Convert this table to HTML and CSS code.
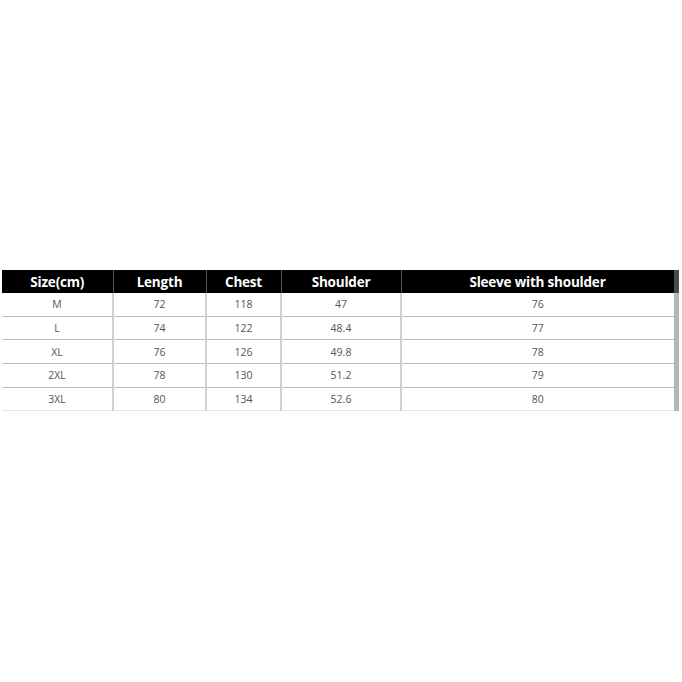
FILE: index.html
```html
<!DOCTYPE html>
<html>
<head>
<meta charset="utf-8">
<link rel="stylesheet" href="styles.css">
</head>
<body>
<div class="page">
  <table class="size-table">
    <colgroup>
      <col class="c1"><col class="c2"><col class="c3"><col class="c4"><col class="c5">
    </colgroup>
    <thead>
      <tr><th>Size(cm)</th><th>Length</th><th>Chest</th><th>Shoulder</th><th>Sleeve with shoulder</th></tr>
    </thead>
    <tbody>
      <tr><td>M</td><td>72</td><td>118</td><td>47</td><td>76</td></tr>
      <tr><td>L</td><td>74</td><td>122</td><td>48.4</td><td>77</td></tr>
      <tr><td>XL</td><td>76</td><td>126</td><td>49.8</td><td>78</td></tr>
      <tr><td>2XL</td><td>78</td><td>130</td><td>51.2</td><td>79</td></tr>
      <tr><td>3XL</td><td>80</td><td>134</td><td>52.6</td><td>80</td></tr>
    </tbody>
  </table>
</div>
</body>
</html>
```
FILE: styles.css
```css
html, body {
  margin: 0;
  padding: 0;
  background: #fff;
}
.page {
  width: 682px;
  height: 682px;
  padding-top: 270px;
  padding-left: 2px;
  box-sizing: border-box;
}
.size-table {
  border-collapse: collapse;
  table-layout: fixed;
  width: 674px;
  font-family: "Open Sans", "Liberation Sans", sans-serif;
}
.c1 { width: 111px; }
.c2 { width: 93px; }
.c3 { width: 75px; }
.c4 { width: 120px; }
.c5 { width: 275px; }
.size-table th {
  background: #000;
  color: #fff;
  font-weight: 700;
  font-size: 13.5px;
  height: 23px;
  padding: 0;
  text-align: center;
  border-left: 1px solid #555;
  letter-spacing: -0.2px;
}
.size-table th:first-child { border-left: none; }
.size-table th:last-child { border-right: 5px solid #4a4a4a; }
.size-table td {
  height: 22.7px;
  padding: 0;
  text-align: center;
  font-size: 10.5px;
  color: #555;
  border-left: 2px solid #cfcfcf;
  border-bottom: 1px solid #bdbdbd;
}
.size-table td:first-child { border-left: none; }
.size-table td:last-child { border-right: 5px solid #b5b5b5; }
.size-table tbody tr:last-child td { border-bottom: 1px solid #e4e4e4; }
```
